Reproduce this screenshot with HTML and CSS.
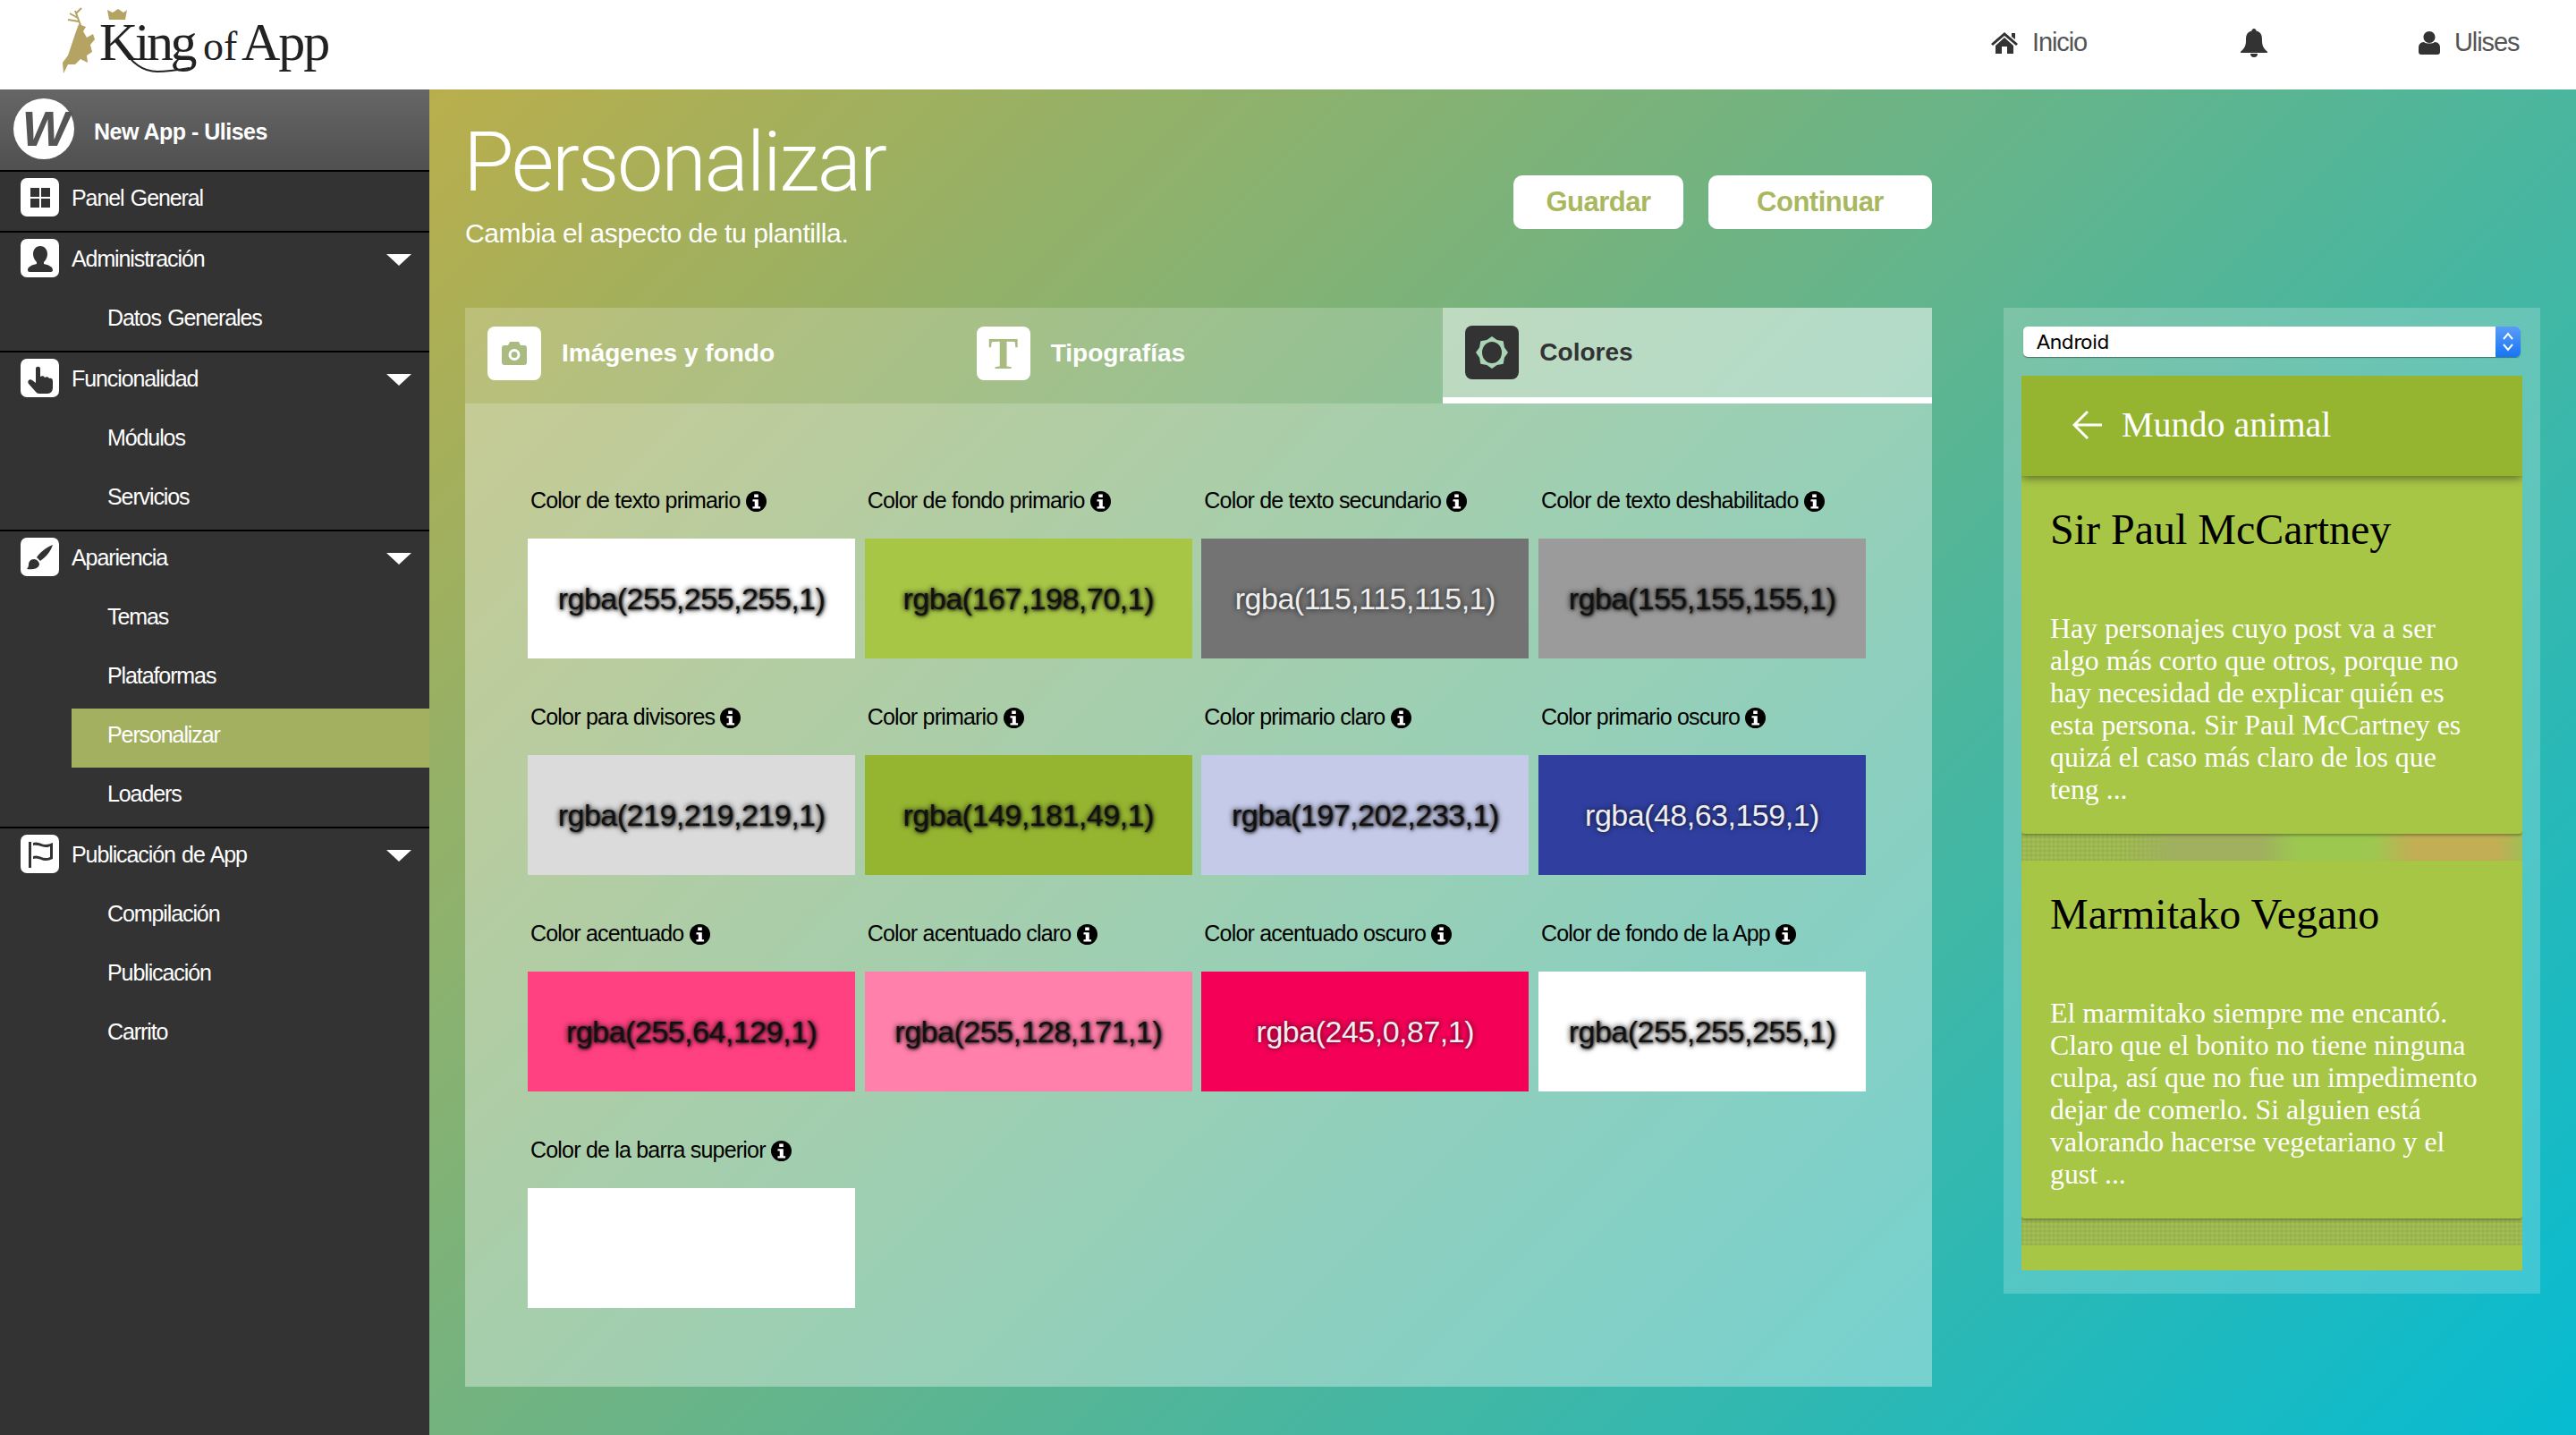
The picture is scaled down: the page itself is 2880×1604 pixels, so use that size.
FILE: index.html
```html
<!DOCTYPE html>
<html>
<head>
    <meta charset="utf-8" />
    <title>King of App - Personalizar</title>
    <link rel="stylesheet" href="styles.css">
</head>
<body>
    <svg class="defs" width="0" height="0">
        <symbol id="i-info" viewBox="0 0 20 20">
            <circle cx="10" cy="10" r="10" fill="#000"></circle>
            <path fill="#fff" d="M8 3h4v3H8zM6.500 8h5.500v7h2v2H6.500v-2h2v-5h-2z"></path>
        </symbol>
        <symbol id="i-grid" viewBox="0 0 43 43">
            <path fill="#333" d="M11 11h10v10H11zM23 11h10v10H23zM11 23h10v10H11zM23 23h10v10H23z"></path>
        </symbol>
        <symbol id="i-user" viewBox="0 0 43 43">
            <path fill="#333" d="M22 8c5 0 8 4 8 9 0 4-2 7-4 9v2c5 1 10 3 10 7 0 1-1 2-2 2H10c-1 0-2-1-2-2 0-4 5-6 10-7v-2c-2-2-4-5-4-9 0-5 3-9 8-9z"></path>
        </symbol>
        <symbol id="i-hand" viewBox="0 0 43 43">
            <path fill="#333" d="M17 11c0-3 5-3 5 0v9c2-1 4-1 5 1 2-1 4-1 5 1 2-1 4 0 4 3v7c0 4-2 7-6 7H21c-2 0-3-1-4-2l-8-9c-2-3 1-6 4-4l4 3z"></path>
        </symbol>
        <symbol id="i-brush" viewBox="0 0 43 43">
            <path fill="#333" d="M36 8c-6 2-14 8-18 14l4 4c6-4 12-11 14-18zM15 24c-4 0-6 3-6 6 0 2-1 4-2 5 5 1 13 0 14-5 0-3-3-6-6-6z"></path>
        </symbol>
        <symbol id="i-flag" viewBox="0 0 43 43">
            <path fill="#333" d="M9 8h3v29H9zM14 9c6-2 9 2 14 2 3 0 5-1 8-2v18c-3 1-5 2-8 2-5 0-8-4-14-2v-3c6-2 9 2 14 2 2 0 3 0 5-1V13c-2 1-3 1-5 1-5 0-8-3-14-2z"></path>
        </symbol>
    </svg>

    <header class="topbar">
        <svg class="logo" viewBox="70 0 300 90" width="300" height="90">
            <path fill="#b5a364" d="M88 27l8 3-3 5 4 7 7-4 2 6-5 6 2 8-6 4 1 8-8-4-6 6h-8l-5 10-1-12 6-8 4-12 4-12z"></path>
            <path fill="none" stroke="#b5a364" stroke-width="2" d="M90 28l-6-16M87 20l-9-5M85 15l6-6M88 24l-12-2"></path>
            <path fill="#b5a364" d="M120 11l6 3 6-4 6 4 4-3-2 11h-18z"></path>
            <text class="logo-big logo-king" x="111" y="67">King</text>
            <text class="logo-small" x="227" y="67">of</text>
            <text class="logo-big logo-app" x="270" y="67">App</text>
            <path fill="none" stroke="#222" stroke-width="2" d="M136 52c8 14 20 28 40 28 12 0 24-2 36-4"></path>
        </svg>
        <nav class="topnav">
            <a class="topnav-item topnav-home">
                <svg viewBox="0 0 30 24" width="30" height="24"><path fill="#333" d="M15 0l15 13-2 2L15 4 2 15l-2-2zM23 1h4v7l-4-3zM5 15L15 6l10 9v9h-7v-8h-6v8H5z"></path></svg>
                Inicio
            </a>
            <a class="topnav-item topnav-bell">
                <svg viewBox="0 0 30 32" width="30" height="32"><path fill="#333" d="M15 0c-1.500 0-2.500 1-2.500 2.500C6 4 6 9 6 14c0 6-3 9-6 12v1h30v-1c-3-3-6-6-6-12 0-5 0-10-6.500-11.500C17.500 1 16.500 0 15 0zM11 28a4 4 0 0 0 8 0z"></path></svg>
            </a>
            <a class="topnav-item topnav-user">
                <svg viewBox="0 0 24 26" width="24" height="26"><path fill="#333" d="M12 0c4 0 6.500 3 6.500 6.500S16 13 12 13 5.500 10 5.500 6.500 8 0 12 0zM6 12c2 2 10 2 12 0 4 0 6 3 6 6v5c0 2-1 3-3 3H3c-2 0-3-1-3-3v-5c0-3 2-6 6-6z"></path></svg>
                Ulises
            </a>
        </nav>
    </header>

    <div class="layout">
        <aside class="sidebar">
            <div class="app-head">
                <span class="app-logo">W</span>
                <span class="app-name">New App - Ulises</span>
            </div>
            <div class="menu-group">
                <div class="menu-head">
                    <span class="menu-icon"><svg width="43" height="43"><use href="#i-grid"></use></svg></span>
                    Panel General
                </div>
            </div>
            <div class="menu-group">
                <div class="menu-head has-sub">
                    <span class="menu-icon"><svg width="43" height="43"><use href="#i-user"></use></svg></span>
                    Administración
                </div>
                <a class="menu-sub">Datos Generales</a>
            </div>
            <div class="menu-group">
                <div class="menu-head has-sub">
                    <span class="menu-icon"><svg width="43" height="43"><use href="#i-hand"></use></svg></span>
                    Funcionalidad
                </div>
                <a class="menu-sub">Módulos</a>
                <a class="menu-sub">Servicios</a>
            </div>
            <div class="menu-group">
                <div class="menu-head has-sub">
                    <span class="menu-icon"><svg width="43" height="43"><use href="#i-brush"></use></svg></span>
                    Apariencia
                </div>
                <a class="menu-sub">Temas</a>
                <a class="menu-sub">Plataformas</a>
                <a class="menu-sub active">Personalizar</a>
                <a class="menu-sub">Loaders</a>
            </div>
            <div class="menu-group last">
                <div class="menu-head has-sub">
                    <span class="menu-icon"><svg width="43" height="43"><use href="#i-flag"></use></svg></span>
                    Publicación de App
                </div>
                <a class="menu-sub">Compilación</a>
                <a class="menu-sub">Publicación</a>
                <a class="menu-sub">Carrito</a>
            </div>
        </aside>

        <main class="main">
            <div class="page-head">
                <div>
                    <h1>Personalizar</h1>
                    <p>Cambia el aspecto de tu plantilla.</p>
                </div>
                <div class="actions">
                    <a class="btn btn-save">Guardar</a>
                    <a class="btn btn-next">Continuar</a>
                </div>
            </div>

            <div class="columns">
                <section class="panel">
                    <div class="tabs">
                        <div class="tab">
                            <span class="tab-icon">
                                <svg viewBox="0 0 28 26" width="28" height="26"><path fill="#a9bb80" fill-rule="evenodd" d="M9 0h10l2 4h4c2 0 3 1 3 3v16c0 2-1 3-3 3H3c-2 0-3-1-3-3V7c0-2 1-3 3-3h4zM14 8a6.500 6.500 0 1 0 0 13 6.500 6.500 0 0 0 0-13zM14 11a3.500 3.500 0 1 1 0 7 3.500 3.500 0 0 1 0-7z"></path></svg>
                            </span>
                            Imágenes y fondo
                        </div>
                        <div class="tab">
                            <span class="tab-icon tab-icon-t">T</span>
                            Tipografías
                        </div>
                        <div class="tab active">
                            <span class="tab-icon">
                                <svg viewBox="-18 -18 36 36" width="36" height="36"><path fill="#a9d5b5" fill-rule="evenodd" d="M0-18L5.700-13.900 12.700-12.700 13.900-5.700 18 0 13.900 5.700 12.700 12.700 5.700 13.900 0 18-5.700 13.900-12.700 12.700-13.900 5.700-18 0-13.900-5.700-12.700-12.700-5.700-13.900zM0-12a11 12 0 1 0 0 24 11 12 0 0 0 0-24z"></path></svg>
                            </span>
                            Colores
                        </div>
                    </div>
                    <div class="colors">
                        <div class="color">
                            <div class="color-label">Color de texto primario <svg class="info"><use href="#i-info"></use></svg></div>
                            <div class="swatch sw-white">rgba(255,255,255,1)</div>
                        </div>
                        <div class="color">
                            <div class="color-label">Color de fondo primario <svg class="info"><use href="#i-info"></use></svg></div>
                            <div class="swatch sw-lime">rgba(167,198,70,1)</div>
                        </div>
                        <div class="color">
                            <div class="color-label">Color de texto secundario <svg class="info"><use href="#i-info"></use></svg></div>
                            <div class="swatch sw-grey light">rgba(115,115,115,1)</div>
                        </div>
                        <div class="color">
                            <div class="color-label">Color de texto deshabilitado <svg class="info"><use href="#i-info"></use></svg></div>
                            <div class="swatch sw-midgrey">rgba(155,155,155,1)</div>
                        </div>
                        <div class="color">
                            <div class="color-label">Color para divisores <svg class="info"><use href="#i-info"></use></svg></div>
                            <div class="swatch sw-silver">rgba(219,219,219,1)</div>
                        </div>
                        <div class="color">
                            <div class="color-label">Color primario <svg class="info"><use href="#i-info"></use></svg></div>
                            <div class="swatch sw-primary">rgba(149,181,49,1)</div>
                        </div>
                        <div class="color">
                            <div class="color-label">Color primario claro <svg class="info"><use href="#i-info"></use></svg></div>
                            <div class="swatch sw-lilac">rgba(197,202,233,1)</div>
                        </div>
                        <div class="color">
                            <div class="color-label">Color primario oscuro <svg class="info"><use href="#i-info"></use></svg></div>
                            <div class="swatch sw-indigo light">rgba(48,63,159,1)</div>
                        </div>
                        <div class="color">
                            <div class="color-label">Color acentuado <svg class="info"><use href="#i-info"></use></svg></div>
                            <div class="swatch sw-pink">rgba(255,64,129,1)</div>
                        </div>
                        <div class="color">
                            <div class="color-label">Color acentuado claro <svg class="info"><use href="#i-info"></use></svg></div>
                            <div class="swatch sw-rose">rgba(255,128,171,1)</div>
                        </div>
                        <div class="color">
                            <div class="color-label">Color acentuado oscuro <svg class="info"><use href="#i-info"></use></svg></div>
                            <div class="swatch sw-crimson light">rgba(245,0,87,1)</div>
                        </div>
                        <div class="color">
                            <div class="color-label">Color de fondo de la App <svg class="info"><use href="#i-info"></use></svg></div>
                            <div class="swatch sw-white">rgba(255,255,255,1)</div>
                        </div>
                        <div class="color">
                            <div class="color-label">Color de la barra superior <svg class="info"><use href="#i-info"></use></svg></div>
                            <div class="swatch sw-white"></div>
                        </div>
                    </div>
                </section>

                <aside class="preview">
                    <div class="platform">
                        <span>Android</span>
                        <span class="platform-arrows">
                            <svg viewBox="0 0 14 24" width="14" height="24"><path fill="none" stroke="#fff" stroke-width="2" d="M2 9l5-6 5 6M2 15l5 6 5-6"></path></svg>
                        </span>
                    </div>
                    <div class="phone">
                        <div class="appbar">
                            <svg viewBox="0 0 34 34" width="34" height="34"><path fill="none" stroke="#fff" stroke-width="3" d="M33 17H3M17 2L2 17l15 15"></path></svg>
                            Mundo animal
                        </div>
                        <article class="card">
                            <h2>Sir Paul McCartney</h2>
                            <p>Hay personajes cuyo post va a ser algo más corto que otros, porque no hay necesidad de explicar quién es esta persona. Sir Paul McCartney es quizá el caso más claro de los que teng ...</p>
                        </article>
                        <div class="strip strip-food"></div>
                        <article class="card">
                            <h2>Marmitako Vegano</h2>
                            <p>El marmitako siempre me encantó. Claro que el bonito no tiene ninguna culpa, así que no fue un impedimento dejar de comerlo. Si alguien está valorando hacerse vegetariano y el gust ...</p>
                        </article>
                        <div class="strip"></div>
                    </div>
                </aside>
            </div>
        </main>
    </div>
</body>
</html>
```

FILE: styles.css
```css
* {
    box-sizing: border-box;
}

html, body {
    margin: 0;
    height: 100%;
}

body {
    font-family: "Liberation Sans", Arial, sans-serif;
    color: #000;
    overflow: hidden;
}

.defs {
    display: block;
    height: 0;
}

/* top bar */
.topbar {
    height: 100px;
    background: #fff;
    display: flex;
    justify-content: space-between;
    align-items: flex-start;
    padding-left: 70px;
}

.logo-big {
    font: 60px "Liberation Serif", serif;
    fill: #222;
}

.logo-king {
    letter-spacing: -3.500px;
}

.logo-app {
    letter-spacing: -2px;
}

.logo-small {
    font: 46px "Liberation Serif", serif;
    fill: #222;
}

.topnav {
    display: flex;
    height: 100px;
    align-items: flex-start;
    font-size: 29px;
    letter-spacing: -1.1px;
    color: #555;
}

.topnav-item {
    display: flex;
    align-items: center;
    height: 95px;
}

.topnav-home {
    width: 279px;
    gap: 16px;
}

.topnav-bell {
    width: 199px;
}

.topnav-user {
    width: 176px;
    gap: 16px;
}

/* sidebar */
.layout {
    display: flex;
    height: 1504px;
}

.sidebar {
    width: 480px;
    flex: none;
    background: #333;
    color: #fff;
    font-size: 25px;
    letter-spacing: -1.1px;
    word-spacing: 1.500px;
}

.app-head {
    height: 92px;
    padding-left: 15px;
    display: flex;
    align-items: center;
    gap: 22px;
    background: linear-gradient(#666, #505050);
    border-bottom: 2px solid #000;
    padding-bottom: 2px;
}

.app-logo {
    width: 68px;
    height: 68px;
    border-radius: 50%;
    background: #fff;
    color: #555;
    font: italic bold 56px/68px "Liberation Sans", sans-serif;
    letter-spacing: -4px;
    text-align: center;
}

.app-name {
    font-weight: bold;
    padding-top: 7px;
    letter-spacing: -0.5px;
    word-spacing: 0;
}

.menu-group {
    border-bottom: 2px solid #000;
}

.menu-group.last {
    border-bottom: 0;
}

.menu-head {
    height: 66px;
    padding: 7px 0 0 23px;
    display: flex;
    align-items: flex-start;
    line-height: 45px;
    gap: 14px;
    position: relative;
}

.menu-head.has-sub::after {
    content: "";
    position: absolute;
    right: 20px;
    top: 24px;
    border-style: solid;
    border-width: 13px 14px 0;
    border-color: #fff transparent transparent;
}

.menu-icon {
    width: 43px;
    height: 43px;
    flex: none;
    background: #fff;
    border-radius: 7px;
    display: block;
}

.menu-icon svg {
    display: block;
}

.menu-sub {
    display: block;
    height: 66px;
    margin-left: 80px;
    padding: 0 0 8px 40px;
    line-height: 58px;
}

.menu-sub.active {
    background: #a3b05f;
}

/* main area */
.main {
    flex: 1;
    padding: 0 40px;
    background: linear-gradient(135deg, #b9ae4c 0%, #06bbd1 100%);
}

.page-head {
    width: 1640px;
    height: 244px;
    display: flex;
    justify-content: space-between;
    color: #fff;
}

h1 {
    margin: 32px 0 0 -2px;
    font: 300 92px/100px Roboto, "Liberation Sans", sans-serif;
    letter-spacing: -2.3px;
}

.page-head p {
    margin: 11px 0 0;
    font-size: 30px;
    line-height: 36px;
    letter-spacing: -0.4px;
}

.actions {
    display: flex;
    gap: 28px;
    margin-top: 96px;
    height: 60px;
}

.btn {
    background: #fff;
    border-radius: 10px;
    color: #a9b85f;
    font-size: 31px;
    font-weight: bold;
    line-height: 60px;
    text-align: center;
    letter-spacing: -0.5px;
}

.btn-save {
    width: 190px;
}

.btn-next {
    width: 250px;
}

.columns {
    display: flex;
    gap: 80px;
    align-items: flex-start;
}

/* colour panel */
.panel {
    width: 1640px;
    height: 1206px;
    background: rgba(255, 255, 255, 0.2);
}

.tabs {
    display: flex;
    height: 107px;
}

.tab {
    flex: 1;
    display: flex;
    align-items: center;
    gap: 23px;
    padding: 0 0 5px 25px;
    color: #fff;
    font-size: 28px;
    font-weight: bold;
}

.tab.active {
    background: rgba(255, 255, 255, 0.4);
    border-bottom: 7px solid #fff;
    color: #333;
    padding-bottom: 0;
}

.tab-icon {
    width: 60px;
    height: 60px;
    background: #fff;
    border-radius: 8px;
    display: flex;
    align-items: center;
    justify-content: center;
    flex: none;
}

.tab.active .tab-icon {
    background: #333;
}

.tab-icon-t {
    font: bold 50px "Liberation Serif", serif;
    color: #a9bb80;
}

.colors {
    height: 1099px;
    padding: 43px 0 0 70px;
    display: grid;
    grid-template-columns: repeat(4, 366px);
    grid-auto-rows: 242px;
    column-gap: 10.670px;
    background: rgba(255, 255, 255, 0.2);
}

.color-label {
    height: 108px;
    padding: 49px 0 0 3px;
    font-size: 25px;
    line-height: 32px;
    letter-spacing: -0.8px;
    white-space: nowrap;
}

.info {
    width: 23px;
    height: 23px;
    vertical-align: -4px;
}

.swatch {
    height: 134px;
    display: flex;
    align-items: center;
    justify-content: center;
    color: #111;
    font-size: 34px;
    letter-spacing: -0.5px;
    text-shadow: 0 0 6px #000, 1px 1px 3px rgba(0, 0, 0, 0.7);
}

.swatch.light {
    color: #eee;
    text-shadow: 0 0 6px rgba(0, 0, 0, 0.8);
}

.sw-white { background: #fff; }
.sw-lime { background: rgb(167, 198, 70); }
.sw-grey { background: rgb(115, 115, 115); }
.sw-midgrey { background: rgb(155, 155, 155); }
.sw-silver { background: rgb(219, 219, 219); }
.sw-primary { background: rgb(149, 181, 49); }
.sw-lilac { background: rgb(197, 202, 233); }
.sw-indigo { background: rgb(48, 63, 159); }
.sw-pink { background: rgb(255, 64, 129); }
.sw-rose { background: rgb(255, 128, 171); }
.sw-crimson { background: rgb(245, 0, 87); }

/* phone preview */
.preview {
    width: 600px;
    height: 1102px;
    padding: 21px 20px 0;
    background: rgba(255, 255, 255, 0.2);
}

.platform {
    margin: 0 2px;
    height: 34px;
    background: #fff;
    border-radius: 5px;
    padding-left: 15px;
    display: flex;
    justify-content: space-between;
    align-items: center;
    font: 22px "DejaVu Sans", sans-serif;
    letter-spacing: -0.6px;
    box-shadow: 0 1px 1px rgba(0, 0, 0, 0.4);
    overflow: hidden;
}

.platform-arrows {
    width: 28px;
    height: 34px;
    background: linear-gradient(#5a9df8, #1674f5);
    display: flex;
    align-items: center;
    justify-content: center;
}

.phone {
    margin-top: 21px;
    height: 1000px;
    background: #a7c646;
    font-family: "Liberation Serif", serif;
    overflow: hidden;
}

.appbar {
    height: 112px;
    padding: 0 0 3px 57px;
    display: flex;
    align-items: center;
    gap: 21px;
    background: rgb(149, 181, 49);
    color: #fff;
    font-size: 40px;
    box-shadow: 0 2px 10px rgba(0, 0, 0, 0.5);
    position: relative;
    z-index: 1;
}

.card {
    height: 400px;
    padding: 32px 43px 0 32px;
    background: #a7c646;
    border-radius: 4px;
    box-shadow: 0 2px 3px rgba(0, 0, 0, 0.3);
    position: relative;
}

.card h2 {
    margin: 0;
    font-size: 48px;
    font-weight: normal;
    line-height: 56px;
}

.card p {
    margin: 65px 0 0;
    color: #fff;
    font-size: 31.8px;
    line-height: 36px;
}

.strip {
    height: 30px;
    background-color: #a2bd55;
    background-image:
        repeating-linear-gradient(90deg, rgba(120, 150, 50, 0.18) 0 2px, transparent 2px 5px),
        repeating-linear-gradient(0deg, rgba(120, 150, 50, 0.18) 0 2px, transparent 2px 5px);
}

.strip-food {
    background-image:
        linear-gradient(90deg, transparent 0 20%, #a0b05e 30% 48%, #9cc850 55% 70%, #c2ae55 78% 95%, #a2bd55 100%),
        repeating-linear-gradient(90deg, rgba(120, 150, 50, 0.18) 0 2px, transparent 2px 5px),
        repeating-linear-gradient(0deg, rgba(120, 150, 50, 0.18) 0 2px, transparent 2px 5px);
}
```
